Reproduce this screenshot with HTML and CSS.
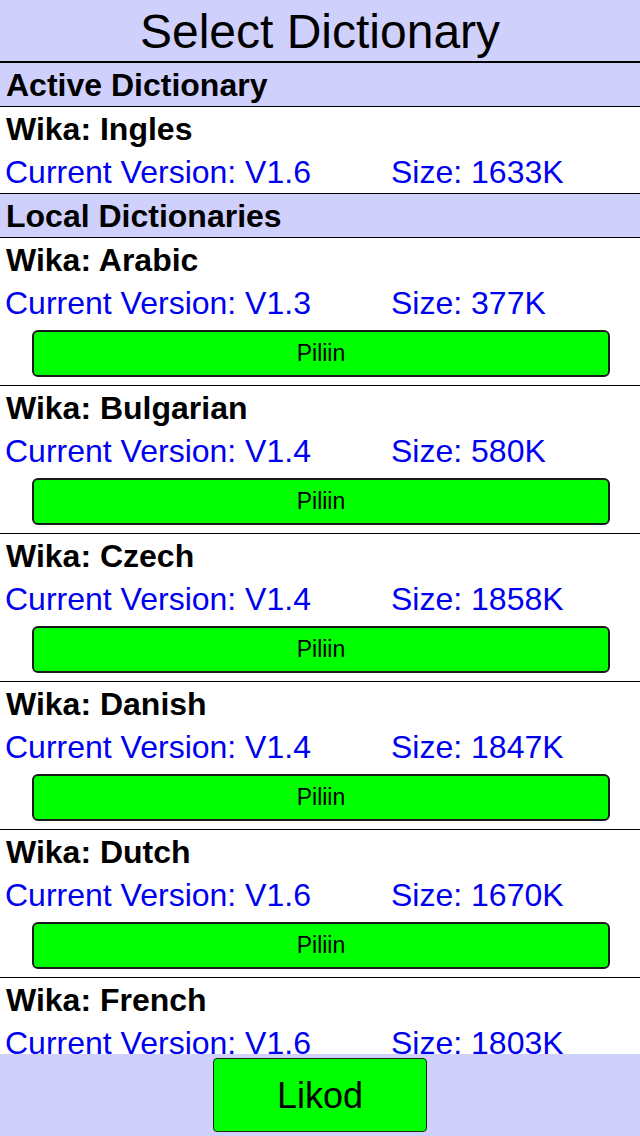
FILE: index.html
```html
<!DOCTYPE html>
<html lang="en">
<head>
    <meta charset="UTF-8">
    <meta name="viewport" content="width=device-width, initial-scale=1.0">
    <title>Select Dictionary</title>
    <link rel="stylesheet" href="styles.css">
</head>
<body>
<div class="screen">
    <div class="title-bar">Select Dictionary</div>

    <div class="list">
        <div class="section">Active Dictionary</div>
        <div class="dict">
            <div class="dict-name">Wika: Ingles</div>
            <div class="dict-info">
                <span>Current Version: V1.6</span>
                <span>Size: 1633K</span>
            </div>
        </div>

        <div class="section">Local Dictionaries</div>

        <div class="dict">
            <div class="dict-name">Wika: Arabic</div>
            <div class="dict-info">
                <span>Current Version: V1.3</span>
                <span>Size: 377K</span>
            </div>
            <button class="pick">Piliin</button>
        </div>

        <div class="dict">
            <div class="dict-name">Wika: Bulgarian</div>
            <div class="dict-info">
                <span>Current Version: V1.4</span>
                <span>Size: 580K</span>
            </div>
            <button class="pick">Piliin</button>
        </div>

        <div class="dict">
            <div class="dict-name">Wika: Czech</div>
            <div class="dict-info">
                <span>Current Version: V1.4</span>
                <span>Size: 1858K</span>
            </div>
            <button class="pick">Piliin</button>
        </div>

        <div class="dict">
            <div class="dict-name">Wika: Danish</div>
            <div class="dict-info">
                <span>Current Version: V1.4</span>
                <span>Size: 1847K</span>
            </div>
            <button class="pick">Piliin</button>
        </div>

        <div class="dict">
            <div class="dict-name">Wika: Dutch</div>
            <div class="dict-info">
                <span>Current Version: V1.6</span>
                <span>Size: 1670K</span>
            </div>
            <button class="pick">Piliin</button>
        </div>

        <div class="dict">
            <div class="dict-name">Wika: French</div>
            <div class="dict-info">
                <span>Current Version: V1.6</span>
                <span>Size: 1803K</span>
            </div>
            <button class="pick">Piliin</button>
        </div>
    </div>

    <div class="bottom-bar">
        <button class="back">Likod</button>
    </div>
</div>
</body>
</html>
```

FILE: styles.css
```css
body {
    margin: 0;
    padding: 0;
    background: #fff;
    font-family: "Liberation Sans", Arial, sans-serif;
    color: #000;
}

.screen {
    display: flex;
    flex-direction: column;
    height: 1136px;
    width: 640px;
    overflow: hidden;
}

.title-bar {
    background: #d0d0fc;
    height: 61px;
    line-height: 63px;
    font-size: 48px;
    text-align: center;
    border-bottom: 2px solid #000;
    flex-shrink: 0;
}

.list {
    flex: 1;
    overflow: hidden;
}

.section {
    background: #d0d0fc;
    height: 43px;
    line-height: 45px;
    padding-left: 6px;
    font-size: 32px;
    font-weight: bold;
    border-bottom: 1px solid #000;
}

.dict {
    display: flex;
    flex-direction: column;
    border-bottom: 1px solid #000;
}

.dict-name {
    height: 43px;
    line-height: 45px;
    padding-left: 6px;
    font-size: 32px;
    font-weight: bold;
}

.dict-info {
    display: grid;
    grid-template-columns: 386px 1fr;
    height: 43px;
    line-height: 45px;
    padding-left: 5px;
    font-size: 32px;
    color: #0000f0;
}

.pick {
    margin: 6px 30px 8px 32px;
    height: 47px;
    background: #00ff00;
    border: 2px solid #1a1a1a;
    border-radius: 6px;
    font-family: "Liberation Sans", Arial, sans-serif;
    font-size: 23px;
    color: #000;
    padding: 0;
}

.bottom-bar {
    background: #d0d0fc;
    height: 82px;
    flex-shrink: 0;
    display: flex;
    justify-content: center;
    align-items: center;
}

.back {
    width: 214px;
    height: 74px;
    background: #00ff00;
    border: 1px solid #222;
    border-radius: 4px;
    font-family: "Liberation Sans", Arial, sans-serif;
    font-size: 36px;
    color: #000;
    padding: 2px 0 0;
}
```
